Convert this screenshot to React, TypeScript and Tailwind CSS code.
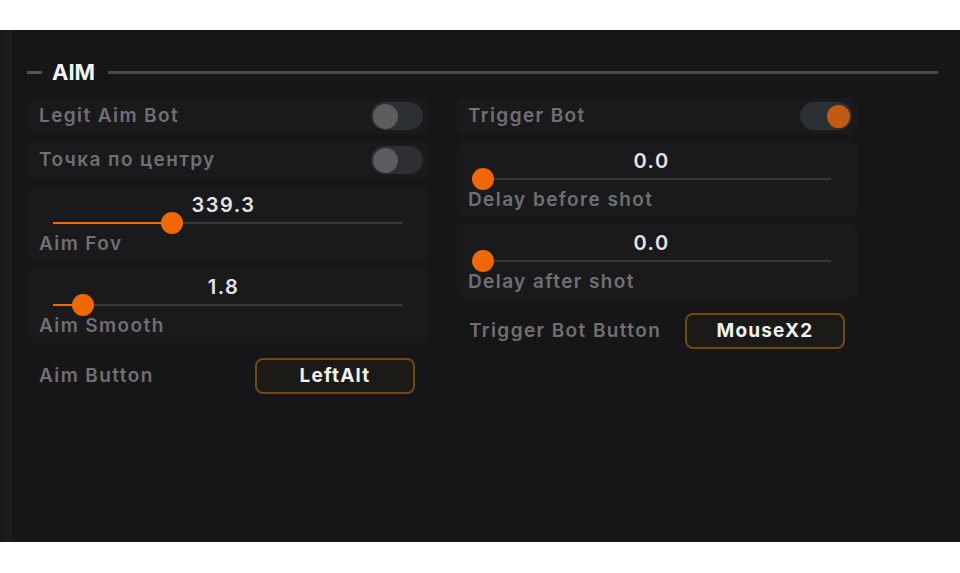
import React from 'react'

const font = { fontFamily: 'Inter, "Noto Sans", sans-serif' }

function Toggle({ on }: { on?: boolean }) {
  return (
    <div className="w-[52px] h-[28px] rounded-full bg-[#2c2f34] flex items-center px-[2px]">
      <div
        className={
          on
            ? 'ml-auto w-[23px] h-[23px] rounded-full bg-[#c25a12]'
            : 'w-[25px] h-[25px] rounded-full bg-[#5d5d60]'
        }
      />
    </div>
  )
}

function ToggleRow({ label, on }: { label: string; on?: boolean }) {
  return (
    <div className="h-[36px] rounded-[6px] bg-[#1a1a1c] flex items-center justify-between pl-[11px] pr-[5px]">
      <span className="text-[19px] font-semibold tracking-[1.4px] text-[#6f6f74]">{label}</span>
      <Toggle on={on} />
    </div>
  )
}

function SliderCard({
  value,
  label,
  pct,
  trackClass,
  valueClass,
  className,
}: {
  value: string
  label: string
  pct: number
  trackClass: string
  valueClass: string
  className?: string
}) {
  return (
    <div className={'h-[75px] rounded-[6px] bg-[#1a1a1c] flex flex-col pt-[9px] ' + (className ?? '')}>
      <div className={'h-[20px] leading-[20px] text-center text-[20px] font-semibold tracking-[1.5px] text-[#e4e4e6] ' + valueClass}>
        {value}
      </div>
      <div className={'relative h-[16px] ' + trackClass}>
        <div className="absolute left-0 right-0 top-[7px] h-[2px] bg-[#38383b]" />
        <div className="absolute left-0 top-[7px] h-[2px] bg-[#f26800]" style={{ width: pct + '%' }} />
        <div
          className="absolute top-[-3px] w-[22px] h-[22px] -ml-[11px] rounded-full bg-[#f26800]"
          style={{ left: pct + '%' }}
        />
      </div>
      <div className="mt-[3px] pl-[11px] h-[20px] leading-[20px] text-[19px] font-semibold tracking-[1.4px] text-[#6f6f74]">
        {label}
      </div>
    </div>
  )
}

function KeyRow({ label, keyName, className }: { label: string; keyName: string; className?: string }) {
  return (
    <div className={'flex items-center ' + (className ?? '')}>
      <span className="w-[216px] text-[19px] font-semibold tracking-[1.4px] text-[#6f6f74]">{label}</span>
      <div className="w-[160px] h-[36px] rounded-[8px] border-2 border-[#74490f] bg-[#1b1a16] flex items-center justify-center text-[19px] font-bold tracking-[1.2px] text-[#f2f2f2]">
        {keyName}
      </div>
    </div>
  )
}

export default function App() {
  return (
    <div className="w-[960px] h-[573px] bg-white flex flex-col" style={font}>
      <div className="h-[30px]" />
      <div className="h-[512px] bg-[#161618] flex">
        <div className="w-[4px] bg-[#17171a]" />
        <div className="w-[8px] bg-[#1c1d21]" />

        <div className="flex-1 flex flex-col pt-[30px]">
          {/* section header */}
          <div className="h-[24px] flex items-center pl-[15px] pr-[22px]">
            <div className="w-[15px] h-[3px] bg-[#545457]" />
            <span className="ml-[10px] text-[22px] font-bold leading-none text-[#f4f4f4]">AIM</span>
            <div className="ml-[13px] flex-1 h-[3px] bg-[#4a4a4d]" />
          </div>

          <div className="mt-[14px] pl-[16px] flex gap-[29px]">
            {/* left column */}
            <div className="w-[400px] flex flex-col">
              <ToggleRow label="Legit Aim Bot" />
              <div className="mt-[8px]">
                <ToggleRow label="Точка по центру" />
              </div>
              <SliderCard className="mt-[8px]" value="339.3" label="Aim Fov" pct={34.1} trackClass="mx-[25px]" valueClass="ml-[25px] mr-[34px]" />
              <SliderCard className="mt-[7px]" value="1.8" label="Aim Smooth" pct={8.6} trackClass="mx-[25px]" valueClass="ml-[25px] mr-[34px]" />
              <KeyRow className="mt-[15px] pl-[11px]" label="Aim Button" keyName="LeftAlt" />
            </div>

            {/* right column */}
            <div className="w-[400px] flex flex-col">
              <ToggleRow label="Trigger Bot" on />
              <SliderCard className="mt-[8px]" value="0.0" label="Delay before shot" pct={3.1} trackClass="ml-[15px] mr-[26px]" valueClass="ml-[15px] mr-[26px]" />
              <SliderCard className="mt-[7px]" value="0.0" label="Delay after shot" pct={3.1} trackClass="ml-[15px] mr-[26px]" valueClass="ml-[15px] mr-[26px]" />
              <KeyRow className="mt-[14px] pl-[12px]" label="Trigger Bot Button" keyName="MouseX2" />
            </div>
          </div>
        </div>
      </div>
      <div className="flex-1 bg-white" />
    </div>
  )
}
